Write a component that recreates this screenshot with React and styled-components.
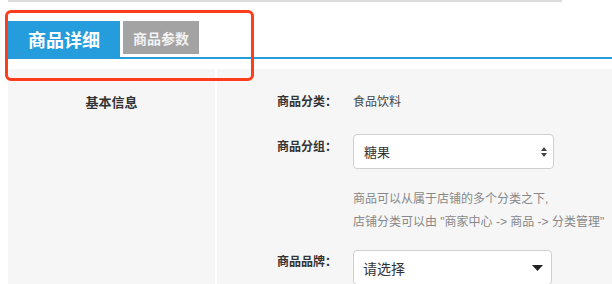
import React from 'react'
import styled, { createGlobalStyle } from 'styled-components'

const GlobalStyle = createGlobalStyle`
  body {
    margin: 0;
    background: #fff;
    font-family: "Liberation Sans", "Noto Sans CJK SC", sans-serif;
    color: #333;
    overflow: hidden;
  }
`

const Page = styled.div`
  position: relative;
  padding-left: 8px;
`

const TopRule = styled.div`
  width: 554px;
  height: 2px;
  background: #dcdcdc;
`

const TabBar = styled.div`
  display: flex;
  align-items: flex-start;
  gap: 3px;
  margin-top: 19px;
  border-bottom: 2px solid #259ddd;
`

const Tab = styled.div`
  display: flex;
  align-items: center;
  height: ${p => (p.active ? '36px' : '33px')};
  padding: 0 ${p => (p.active ? '20px' : '10px')};
  background: ${p => (p.active ? '#259ddd' : '#a3a3a3')};
  color: ${p => (p.active ? '#fff' : '#f2f2f2')};
  font-size: ${p => (p.active ? '18px' : '14px')};
  font-weight: bold;
`

const Highlight = styled.div`
  position: absolute;
  left: 5px;
  top: 10px;
  width: 243px;
  height: 65px;
  border: 3px solid #ff3d1c;
  border-radius: 6px;
`

const Body = styled.div`
  display: grid;
  grid-template-columns: 207px 1fr;
  gap: 2px;
  margin-top: 10px;
  height: 215px;
`

const Side = styled.div`
  background: #f6f6f6;
  padding-top: 24px;
  text-align: center;
  font-size: 13px;
  line-height: 20px;
  font-weight: bold;
  color: #333;
`

const Main = styled.div`
  background: #f6f6f6;
  padding: 23px 0 0 60px;
  white-space: nowrap;
`

const Row = styled.div`
  display: flex;
  align-items: flex-start;
  margin-top: ${p => p.gap || 0}px;
`

const Label = styled.div`
  width: 76px;
  flex: none;
  padding-top: ${p => p.offset || 0}px;
  font-size: 12px;
  line-height: 20px;
  font-weight: bold;
  color: #333;
`

const Value = styled.div`
  font-size: 12px;
  line-height: 20px;
  color: #444;
`

const SelectBox = styled.div`
  box-sizing: border-box;
  display: flex;
  align-items: center;
  justify-content: space-between;
  width: ${p => p.width}px;
  height: 35px;
  padding: 0 ${p => p.right}px 0 ${p => p.left}px;
  background: #fff;
  border: 1px solid #cfcfcf;
  border-radius: 4px;
  font-size: ${p => p.size}px;
  color: #333;
`

const Help = styled.div`
  margin: 19px 0 0 76px;
  font-size: 12px;
  line-height: 23px;
  color: #888;
`

const UpDown = () => (
  <svg width="6" height="10" viewBox="0 0 6 10">
    <polygon points="3,0 6,4 0,4" fill="#444" />
    <polygon points="0,6 6,6 3,10" fill="#444" />
  </svg>
)

const Caret = () => (
  <svg width="11" height="6" viewBox="0 0 11 6">
    <polygon points="0,0 11,0 5.5,6" fill="#222" />
  </svg>
)

export default function App() {
  return (
    <Page>
      <GlobalStyle />
      <TopRule />
      <TabBar>
        <Tab active>商品详细</Tab>
        <Tab>商品参数</Tab>
      </TabBar>
      <Body>
        <Side>基本信息</Side>
        <Main>
          <Row>
            <Label>商品分类：</Label>
            <Value>食品饮料</Value>
          </Row>
          <Row gap={22}>
            <Label offset={3}>商品分组：</Label>
            <SelectBox width={201} left={10} right={6} size={13}>
              糖果
              <UpDown />
            </SelectBox>
          </Row>
          <Help>
            商品可以从属于店铺的多个分类之下,
            <br />
            店铺分类可以由 "商家中心 -&gt; 商品 -&gt; 分类管理"
          </Help>
          <Row gap={16}>
            <Label offset={2}>商品品牌：</Label>
            <SelectBox width={199} left={9} right={8} size={14}>
              请选择
              <Caret />
            </SelectBox>
          </Row>
        </Main>
      </Body>
      <Highlight />
    </Page>
  )
}
